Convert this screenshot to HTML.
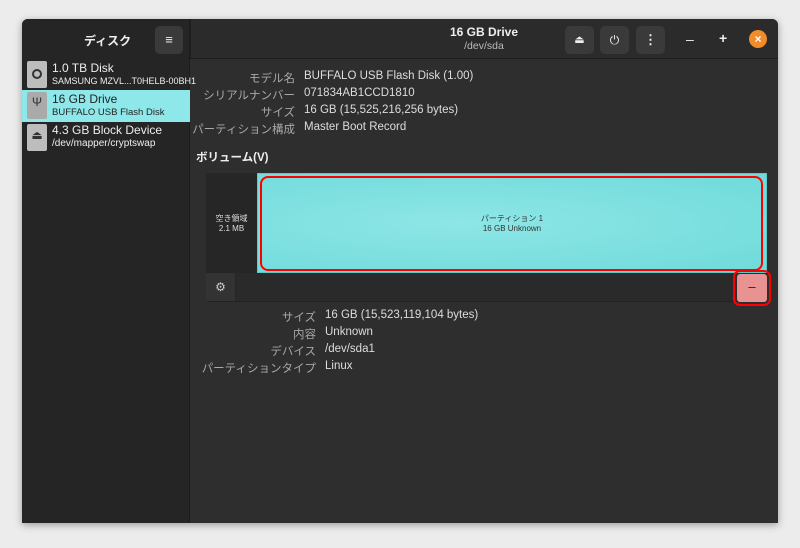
<!DOCTYPE html>
<html><head><meta charset="utf-8"><style>
*{margin:0;padding:0;box-sizing:border-box}
body{width:800px;height:548px;background:#ececec;font-family:"Liberation Sans","Noto Sans CJK JP",sans-serif;position:relative;overflow:hidden}
.win{position:absolute;left:22px;top:19px;width:756px;height:504px;background:#2e2e2e;border-radius:6px 6px 0 0;overflow:hidden;box-shadow:0 2px 8px rgba(0,0,0,.35)}
.side{position:absolute;left:0;top:0;width:168px;height:504px;background:#252525;border-right:1px solid #1c1c1c}
.hdr{position:absolute;left:0;top:0;width:756px;height:40px;background:#2b2b2b;border-bottom:1px solid #1e1e1e}
.abs{position:absolute}
.t{color:#eee;font-size:12px;position:absolute;white-space:nowrap}
.btn{position:absolute;width:29px;height:28px;background:#3a3a3a;border-radius:5px;top:7px;color:#eee;text-align:center;line-height:28px;font-size:13px}
.lab{position:absolute;color:#a8a8a8;font-size:11.5px;text-align:right;white-space:nowrap}
.val{position:absolute;color:#ddd;font-size:11.5px;white-space:nowrap}
.ic{position:absolute;left:5px;width:20px;height:27px;background:#bdbdbd;border-radius:2px}
</style></head><body>
<div class="win">
 <div class="hdr"></div>
 <div class="side"></div>
 <div class="abs" style="left:168px;top:0;width:1px;height:40px;background:#1e1e1e"></div>
 <div class="t" style="left:62px;top:13px;font-weight:bold;font-size:12px">ディスク</div>
 <div class="btn" style="left:133px;width:28px;">≡</div>
 <div class="t" style="left:422px;top:6px;font-weight:bold;font-size:12px;width:80px;text-align:center">16 GB Drive</div>
 <div class="t" style="left:422px;top:21px;font-size:10.5px;color:#bbb;width:80px;text-align:center">/dev/sda</div>
 <div class="btn" style="left:543px;font-size:11px">⏏</div>
 <div class="btn" style="left:578px;font-size:12px">⏻</div>
 <div class="btn" style="left:614px;font-weight:bold">⋮</div>
 <div class="t" style="left:664px;top:12px;font-size:14px">–</div>
 <div class="t" style="left:697px;top:11px;font-size:14px;font-weight:bold">+</div>
 <div class="abs" style="left:727px;top:11px;width:18px;height:18px;border-radius:50%;background:#f08c2a;color:#fff;font-size:12px;text-align:center;line-height:18px;font-weight:bold">×</div>
 <div class="ic" style="top:42px"><div class="abs" style="left:5px;top:8px;width:10px;height:10px;border-radius:50%;border:2px solid #333"></div></div>
 <div class="t" style="left:30px;top:42px;font-size:12px">1.0 TB Disk</div>
 <div class="t" style="left:30px;top:57px;font-size:9px">SAMSUNG MZVL...T0HELB-00BH1</div>
 <div class="abs" style="left:0;top:71px;width:168px;height:32px;background:#8ee8ea"></div>
 <div class="ic" style="top:73px;background:#aaa;text-align:center;color:#333;font-size:12px;line-height:20px">Ψ</div>
 <div class="t" style="left:30px;top:73px;font-size:12px;color:#222">16 GB Drive</div>
 <div class="t" style="left:30px;top:88px;font-size:9.5px;color:#222">BUFFALO USB Flash Disk</div>
 <div class="ic" style="top:105px;text-align:center;color:#333;font-size:12px;line-height:22px">⏏</div>
 <div class="t" style="left:30px;top:104px;font-size:12px">4.3 GB Block Device</div>
 <div class="t" style="left:30px;top:119px;font-size:10px">/dev/mapper/cryptswap</div>
 <div class="lab" style="right:483px;top:51px">モデル名</div><div class="val" style="left:282px;top:51px">BUFFALO USB Flash Disk (1.00)</div>
 <div class="lab" style="right:483px;top:68px">シリアルナンバー</div><div class="val" style="left:282px;top:68px">071834AB1CCD1810</div>
 <div class="lab" style="right:483px;top:85px">サイズ</div><div class="val" style="left:282px;top:85px">16 GB (15,525,216,256 bytes)</div>
 <div class="lab" style="right:483px;top:102px">パーティション構成</div><div class="val" style="left:282px;top:102px">Master Boot Record</div>
 <div class="t" style="left:174px;top:130px;font-weight:bold;font-size:11.5px">ボリューム(V)</div>
 <div class="abs" style="left:184px;top:154px;width:561px;height:129px;background:#2a2a2a;border:1px solid #222;border-radius:3px"></div>
 <div class="abs" style="left:184px;top:154px;width:51px;height:100px;background:#262626"></div>
 <div class="t" style="left:184px;top:195px;width:51px;text-align:center;font-size:8px;color:#ddd;line-height:10px">空き領域<br>2.1 MB</div>
 <div class="abs" style="left:235px;top:154px;width:510px;height:100px;background:radial-gradient(ellipse at 40% 50%,#8ee6e6,#6fdada);border:1px solid #5cc"></div>
 <div class="abs" style="left:238px;top:157px;width:503px;height:95px;border:2px solid #f00;border-radius:8px"></div>
 <div class="t" style="left:380px;top:195px;width:220px;text-align:center;font-size:8px;color:#333;line-height:10px">パーティション 1<br>16 GB Unknown</div>
 <div class="abs" style="left:184px;top:254px;width:30px;height:28px;background:#333;border-right:1px solid #252525;color:#ccc;text-align:center;line-height:28px;font-size:12px">⚙</div>
 <div class="abs" style="left:711px;top:251px;width:38px;height:36px;border:2px solid #f00;border-radius:7px"></div>
 <div class="abs" style="left:715px;top:255px;width:30px;height:28px;background:#e89292;border-radius:3px;text-align:center;line-height:26px;color:#222;font-size:13px">–</div>
 <div class="lab" style="right:462px;top:290px">サイズ</div><div class="val" style="left:303px;top:290px">16 GB (15,523,119,104 bytes)</div>
 <div class="lab" style="right:462px;top:307px">内容</div><div class="val" style="left:303px;top:307px">Unknown</div>
 <div class="lab" style="right:462px;top:324px">デバイス</div><div class="val" style="left:303px;top:324px">/dev/sda1</div>
 <div class="lab" style="right:462px;top:341px">パーティションタイプ</div><div class="val" style="left:303px;top:341px">Linux</div>
</div>
</body></html>
